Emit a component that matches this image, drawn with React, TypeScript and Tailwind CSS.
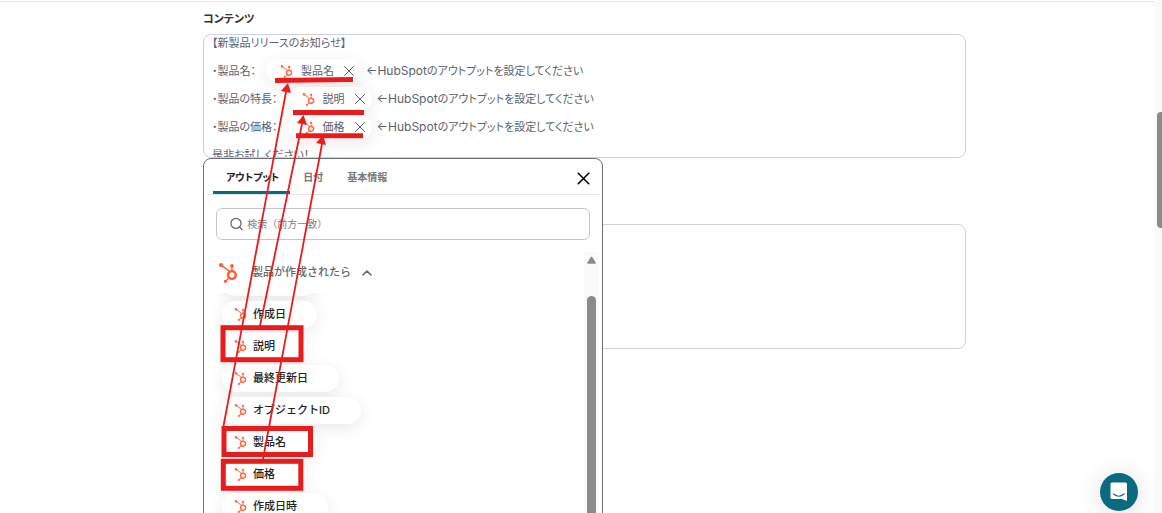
import { useState } from 'react';
import { FaHubspot } from 'react-icons/fa';
import { ChevronUp, Search, X } from 'lucide-react';

interface ContentLine {
  label: string;
  output: string;
}

const contentLines: ContentLine[] = [
  { label: '・製品名：', output: '製品名' },
  { label: '・製品の特長：', output: '説明' },
  { label: '・製品の価格：', output: '価格' },
];

const tabs = ['アウトプット', '日付', '基本情報'];

const outputs = ['作成日', '説明', '最終更新日', 'オブジェクトID', '製品名', '価格', '作成日時'];

function OutputToken({ name }: { name: string }) {
  return (
    <span className="flex h-6 items-center rounded-full bg-white pr-[3px] pl-[14px] shadow-[0_4px_16px_rgba(0,0,0,0.09)]">
      <FaHubspot className="mr-2 size-[13px] text-[#ff6a45]" />
      {name}
      <button type="button" aria-label={`${name}を削除`} className="ml-[6px] text-[#4b5563]">
        <X className="size-[18px]" strokeWidth={1.25} />
      </button>
    </span>
  );
}

function ContentEditor() {
  return (
    <div
      role="textbox"
      aria-labelledby="content-label"
      aria-multiline="true"
      className="h-[124px] overflow-hidden rounded-lg border border-[#cdd2da] bg-white px-2 text-[11px] leading-7 text-[#5a616b] [font-feature-settings:'palt']"
    >
      <div className="-mt-[6px]">
        <p>【新製品リリースのお知らせ】</p>
        {contentLines.map(line => (
          <div key={line.label} className="flex h-7 items-center whitespace-nowrap">
            <span className="mr-[10px]">{line.label}</span>
            <OutputToken name={line.output} />
            <span className="ml-[5px]">
              <span className="text-xs">←HubSpot</span>のアウトプットを設定してください
            </span>
          </div>
        ))}
        <p>是非お試しください！</p>
      </div>
    </div>
  );
}

function OutputPicker() {
  const [activeTab, setActiveTab] = useState(tabs[0]);

  return (
    <div className="absolute top-full left-0 z-10 flex h-[480px] w-[400px] flex-col overflow-hidden rounded-lg border border-[#6b6f76] bg-white">
      <div className="mx-[3px] flex h-9 shrink-0 items-stretch border-b border-[#e2e4e7] pl-[6px]">
        <div role="tablist" className="flex flex-1 [font-feature-settings:'palt']">
          {tabs.map(tab => (
            <button
              key={tab}
              type="button"
              role="tab"
              aria-selected={tab === activeTab}
              onClick={() => setActiveTab(tab)}
              className={
                tab === activeTab
                  ? 'border-b-[3px] border-[#0b6a80] pt-1 pr-[11px] pl-[13px] text-[10px] font-bold text-[#222]'
                  : 'border-b-[3px] border-transparent pt-1 pr-[11px] pl-[13px] text-[10px] font-bold text-[#777]'
              }
            >
              {tab}
            </button>
          ))}
        </div>
        <button type="button" aria-label="閉じる" className="mr-[5px] pt-[3px] text-black">
          <X className="size-[21px]" strokeWidth={1.8} />
        </button>
      </div>

      <label className="mx-3 mt-[13px] flex h-8 shrink-0 items-center gap-[3px] rounded-md border border-[#c4c7cc] pl-3">
        <Search className="size-4 text-[#666]" strokeWidth={2} />
        <input
          type="text"
          aria-label="検索"
          placeholder="検索（前方一致）"
          className="w-full text-[10px] outline-none placeholder:text-[#808080]"
        />
      </label>

      <div className="mt-3 mr-[3px] flex min-h-0 flex-1">
        <div className="flex flex-1 flex-col">
          <button type="button" aria-expanded="true" className="flex h-[41px] shrink-0 items-center pl-[14px] text-[11px] font-medium text-[#666]">
            <FaHubspot className="mr-[14px] size-5 text-[#ff5c35]" />
            製品が作成されたら
            <ChevronUp className="ml-2 size-4" strokeWidth={2.4} />
          </button>
          <div className="min-h-0 flex-1 overflow-hidden pl-[18px]">
            {/* bottom edge of the item scrolled out above */}
            <div aria-hidden="true" className="-mt-6 h-[27px] w-[95px] rounded-full bg-white shadow-[0_4px_16px_rgba(0,0,0,0.09)]" />
            <ul className="mt-[5px] flex flex-col gap-[5px]">
              {outputs.map(output => (
                <li key={output} className="flex">
                  <button
                    type="button"
                    className="flex h-[27px] items-center gap-[6px] rounded-full bg-white pr-[31px] pl-3 text-[11px] font-medium text-[#222] shadow-[0_4px_16px_rgba(0,0,0,0.09)]"
                  >
                    <FaHubspot className="size-[13px] text-[#ff6a45]" />
                    {output}
                  </button>
                </li>
              ))}
            </ul>
          </div>
        </div>
        <div className="flex w-[15px] flex-col items-center bg-[#fafafa]">
          <svg viewBox="0 0 9 8" className="mt-1 h-2 w-[9px]" aria-hidden="true">
            <path d="M4.5 1.5 L8 7 H1 Z" fill="#8b8b8b" stroke="#8b8b8b" strokeWidth="1.6" strokeLinejoin="round" />
          </svg>
          <div className="mt-8 w-[9px] flex-1 rounded-full bg-[#8b8b8b]" />
        </div>
      </div>
    </div>
  );
}

// Hand-drawn guides that link each output in the picker to its place in the editor
function Annotations() {
  return (
    <svg
      aria-hidden="true"
      viewBox="0 0 1162 513"
      className="pointer-events-none absolute top-0 left-0 z-20 h-[513px] w-[1162px]"
      fill="none"
      stroke="#e81c1c"
    >
      <g strokeWidth="5">
        <path d="M275 80.5 L353 79.5" />
        <path d="M293 112.5 H364" />
        <path d="M296 135.7 H363" />
        <rect x="223" y="327.7" width="78" height="32" />
        <rect x="224" y="428.5" width="86.5" height="26" />
        <rect x="223.3" y="461.3" width="77.5" height="27" />
      </g>
      <g strokeWidth="1.8">
        <path d="M223.5 426 L286 92" />
        <path d="M260 326 L302 124" />
        <path d="M263 459 L322 144" />
      </g>
      <g fill="#e81c1c" stroke="none">
        <path d="M288 83 L281 91 L291 93 Z" />
        <path d="M303.5 115 L297 123 L307 125 Z" />
        <path d="M323 135 L316 143 L326 145 Z" />
      </g>
    </svg>
  );
}

function ChatLauncher() {
  return (
    <button
      type="button"
      aria-label="チャットを開く"
      className="absolute right-6 bottom-[2px] z-10 flex size-[38px] items-center justify-center rounded-full bg-[#0b6a80] shadow-[0_2px_24px_rgba(0,0,0,0.14)]"
    >
      <svg viewBox="0 0 18 20" className="h-5 w-[18px]">
        <path d="M2 0.5 H15.5 Q17 0.5 17 2 V19 L12 17 H2 Q0.5 17 0.5 15.5 V2 Q0.5 0.5 2 0.5 Z" fill="#fff" />
        <path d="M3.5 12 Q9 16.5 14 12" fill="none" stroke="#0b6a80" strokeWidth="1.2" strokeLinecap="round" />
      </svg>
    </button>
  );
}

export default function App() {
  return (
    <div className="relative flex h-screen overflow-hidden bg-white font-['Inter','Noto_Sans_CJK_JP',sans-serif]">
      <main className="mt-px flex-1 border-t border-[#e2e4e7] pt-[7px] pr-[188px] pl-[203px]">
        <h2 id="content-label" className="mb-[5px] text-[11px] leading-5 font-bold text-[#333] [font-feature-settings:'palt']">
          コンテンツ
        </h2>
        <div className="relative">
          <ContentEditor />
          <OutputPicker />
        </div>
        <textarea
          aria-label="補足"
          className="mt-[66px] block h-[125px] w-full resize-none rounded-lg border border-[#cdd2da] bg-white p-2 text-[11px] outline-none"
        />
      </main>
      <div className="flex w-2 justify-end bg-[#fafafa]">
        <div className="mt-28 h-[116px] w-[5px] rounded-l bg-[#8b8b8b]" />
      </div>
      <Annotations />
      <ChatLauncher />
    </div>
  );
}
